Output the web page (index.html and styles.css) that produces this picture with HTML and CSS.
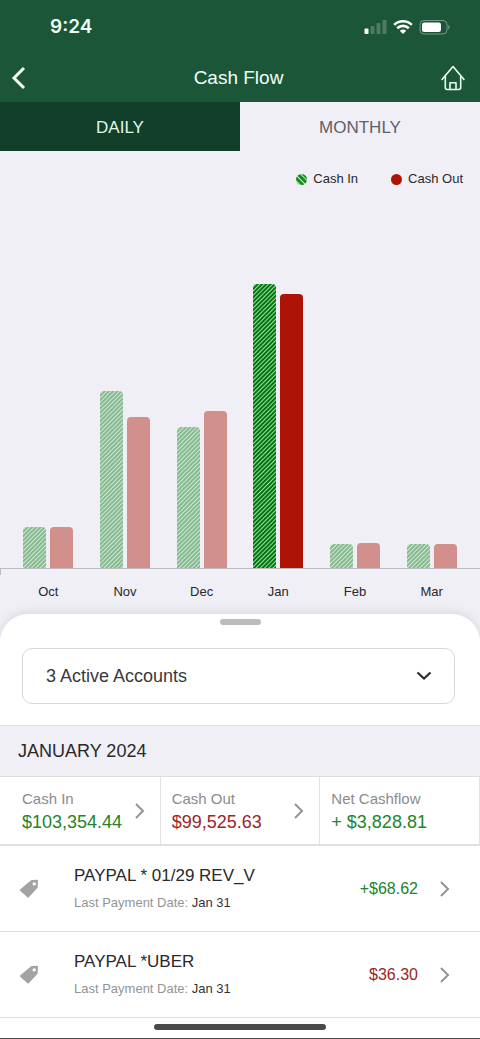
FILE: index.html
```html
<!DOCTYPE html>
<html lang="en">
<head>
<meta charset="utf-8">
<meta name="viewport" content="width=device-width, initial-scale=1">
<title>Cash Flow</title>
<link rel="stylesheet" href="styles.css">
</head>
<body>
<header class="header">
  <div class="status">
    <span class="time">9:24</span>
    <svg class="status-icons" width="86" height="18" viewBox="0 0 86 18" fill="#fff" aria-hidden="true">
      <rect x="0.500" y="10.500" width="4" height="5.500" rx="1"/>
      <g opacity=".22"><rect x="6.500" y="8" width="4" height="8" rx="1"/><rect x="12.500" y="5" width="4" height="11" rx="1"/><rect x="18.500" y="2" width="4" height="14" rx="1"/></g>
      <g fill="none" stroke="#fff" stroke-width="2.600"><path d="M30.200 6.800a12.500 12.500 0 0 1 17.600 0"/><path d="M33.200 10.200a8.300 8.300 0 0 1 11.600 0"/></g>
      <path d="M35.800 12.700a4.600 4.600 0 0 1 6.400 0L39 16z"/>
      <rect x="56" y="2.500" width="27" height="13.500" rx="4" fill="none" stroke="#fff" stroke-opacity=".4"/>
      <rect x="58" y="4.500" width="19" height="9.500" rx="2.200"/>
      <path d="M84.400 7v4.500c1.400-.6 1.400-3.900 0-4.500z" opacity=".5"/>
    </svg>
  </div>
  <div class="navbar">
    <button class="icon-button" aria-label="Back"><svg width="16" height="24" viewBox="0 0 16 24" fill="none" stroke="#f2fff8" stroke-width="3"><path d="M13 2L3 12l10 10"/></svg></button>
    <h1 class="title">Cash Flow</h1>
    <button class="icon-button home" aria-label="Home"><svg width="26" height="26" viewBox="0 0 26 26" fill="none" stroke="#eafff3" stroke-width="1.600" stroke-linejoin="round" stroke-linecap="round"><path d="M2 14.500L13 1.500l11 13"/><path d="M5.300 11v11.500a2 2 0 0 0 2 2h11.400a2 2 0 0 0 2-2V11"/><path d="M10 24.500v-6.700h6v6.700"/></svg></button>
  </div>
</header>
<main class="main">
  <div class="tabs" role="tablist">
    <button class="tab tab-dark" role="tab" aria-selected="false">DAILY</button>
    <button class="tab" role="tab" aria-selected="true">MONTHLY</button>
  </div>
  <section class="chart" aria-label="Monthly cash flow">
    <div class="legend">
      <span class="legend-item"><i class="dot dot-in"></i>Cash In</span>
      <span class="legend-item"><i class="dot dot-out"></i>Cash Out</span>
    </div>
    <div class="plot">
      <div class="pair"><i class="bar bar-in" style="height:41px"></i><i class="bar bar-out" style="height:41px"></i></div>
      <div class="pair"><i class="bar bar-in" style="height:177px"></i><i class="bar bar-out" style="height:151px"></i></div>
      <div class="pair"><i class="bar bar-in" style="height:141px"></i><i class="bar bar-out" style="height:157px"></i></div>
      <div class="pair current"><i class="bar bar-in" style="height:284px"></i><i class="bar bar-out" style="height:274px"></i></div>
      <div class="pair"><i class="bar bar-in" style="height:24px"></i><i class="bar bar-out" style="height:25px"></i></div>
      <div class="pair"><i class="bar bar-in" style="height:24px"></i><i class="bar bar-out" style="height:24px"></i></div>
    </div>
    <div class="axis"><span>Oct</span><span>Nov</span><span>Dec</span><span>Jan</span><span>Feb</span><span>Mar</span></div>
  </section>
  <section class="sheet">
    <div class="grabber"></div>
    <div class="picker">
      <select class="select" aria-label="Accounts"><option>3 Active Accounts</option></select>
      <svg class="caret" width="16" height="10" viewBox="0 0 16 10" fill="none" stroke="#2b2b30" stroke-width="2.200"><path d="M1.500 1.500L8 7.500l6.500-6"/></svg>
    </div>
    <h2 class="month">JANUARY 2024</h2>
    <div class="summary">
      <button class="total"><span class="figures"><span class="label">Cash In</span><span class="value green">$103,354.44</span></span><svg class="chevron" width="10" height="16" viewBox="0 0 10 16"><path d="M1 1l7 7-7 7"/></svg></button>
      <button class="total next"><span class="figures"><span class="label">Cash Out</span><span class="value red">$99,525.63</span></span><svg class="chevron" width="10" height="16" viewBox="0 0 10 16"><path d="M1 1l7 7-7 7"/></svg></button>
      <div class="total next"><span class="figures"><span class="label">Net Cashflow</span><span class="value green">+ $3,828.81</span></span></div>
    </div>
    <button class="row">
      <svg class="tag" width="20" height="20" viewBox="0 0 20 20"><path fill-rule="evenodd" d="M11.500 1.700Q12 1 13 1L18 .8q1 0 1 1l-.3 6q0 .8-.6 1.500l-8.300 9q-.7.700-1.400 0L1.200 11.800q-.7-.8.1-1.500zM15.200 3.200a1.700 1.700 0 1 0 .1 3.400 1.700 1.700 0 0 0-.1-3.400z"/></svg>
      <span class="details"><span class="name">PAYPAL * 01/29 REV_V</span><span class="date">Last Payment Date: <b>Jan 31</b></span></span>
      <span class="amount green">+$68.62</span>
      <svg class="chevron" width="10" height="16" viewBox="0 0 10 16"><path d="M1 1l7 7-7 7"/></svg>
    </button>
    <button class="row">
      <svg class="tag" width="20" height="20" viewBox="0 0 20 20"><path fill-rule="evenodd" d="M11.500 1.700Q12 1 13 1L18 .8q1 0 1 1l-.3 6q0 .8-.6 1.500l-8.300 9q-.7.700-1.400 0L1.200 11.800q-.7-.8.1-1.500zM15.200 3.200a1.700 1.700 0 1 0 .1 3.400 1.700 1.700 0 0 0-.1-3.400z"/></svg>
      <span class="details"><span class="name">PAYPAL *UBER</span><span class="date">Last Payment Date: <b>Jan 31</b></span></span>
      <span class="amount red">$36.30</span>
      <svg class="chevron" width="10" height="16" viewBox="0 0 10 16"><path d="M1 1l7 7-7 7"/></svg>
    </button>
    <div class="home-area"><div class="home-bar"></div></div>
  </section>
</main>
</body>
</html>
```
FILE: styles.css
```css
* { box-sizing: border-box; }
body {
  margin: 0;
  background: #f0eff5;
  color: #29282d;
  font-family: "Liberation Sans", Arial, sans-serif;
}
button {
  border: 0;
  padding: 0;
  background: none;
  color: inherit;
  font: inherit;
  text-align: left;
}
svg { display: block; flex: none; }

.header { background: #1b5638; color: #f2fff8; }
.status {
  display: flex;
  justify-content: space-between;
  align-items: center;
  height: 54px;
  padding: 0 30px 0 50px;
}
.time { font: 600 19px/24px Inter, sans-serif; }
.navbar {
  display: grid;
  grid-template-columns: 1fr auto 1fr;
  align-items: center;
  height: 48px;
  padding: 0 14px 0 11px;
}
.icon-button { justify-self: start; }
.home { justify-self: end; }
.title { margin: 0; font-size: 19px; line-height: 24px; font-weight: 400; }

.tabs { display: grid; grid-template-columns: 1fr 1fr; }
.tab {
  height: 49px;
  padding-top: 2px;
  color: #626068;
  font-size: 17px;
  text-align: center;
}
.tab-dark { background: #113f29; color: #e0f8ea; }

.legend {
  display: flex;
  justify-content: flex-end;
  gap: 33px;
  padding: 18px 17px 0;
  font-size: 13px;
  line-height: 20px;
}
.legend-item { display: flex; align-items: center; gap: 6px; }
.dot { width: 11px; height: 11px; border-radius: 50%; }
.dot-in { background: repeating-linear-gradient(45deg, #168a22 0 2px, #c9f2cc 3px, #168a22 4px); }
.dot-out { background: #ad1405; }
.plot, .axis {
  display: grid;
  grid-template-columns: repeat(6, 1fr);
  padding: 0 10px;
}
.plot { height: 380px; border-bottom: 1px solid #bdbcc2; }
.pair {
  display: flex;
  justify-content: center;
  align-items: flex-end;
  gap: 4px;
  opacity: .43;
}
.current { opacity: 1; }
.bar { width: 23px; border-radius: 4px 4px 0 0; }
.bar-in { background: repeating-linear-gradient(135deg, #087016 0 1px, #8fe894 2px, #087016 3px); }
.bar-out { background: #ad1405; }
.axis {
  position: relative;
  padding-top: 13px;
  padding-bottom: 12px;
  font-size: 13px;
  line-height: 20px;
  text-align: center;
}
.axis::before {
  content: "";
  position: absolute;
  top: 0;
  left: 0;
  width: 1px;
  height: 6px;
  background: #bdbcc2;
}

.sheet {
  padding-top: 5px;
  background: #fff;
  border-radius: 28px 28px 0 0;
  box-shadow: 0 -2px 10px #d9d8e0;
}
.grabber, .home-bar { height: 6px; margin: 0 auto; border-radius: 3px; }
.grabber { width: 41px; background: #bcbcbe; }
.picker { display: grid; align-items: center; margin: 23px 25px 21px 22px; }
.select, .caret { grid-area: 1 / 1; }
.select {
  appearance: none;
  width: 100%;
  height: 56px;
  padding: 0 48px 0 23px;
  border: 1px solid #d8d7db;
  border-radius: 10px;
  background: #fff;
  color: #39383c;
  font: 18px "Liberation Sans", Arial, sans-serif;
}
.caret { justify-self: end; margin-right: 23px; pointer-events: none; }
.month {
  margin: 0;
  padding: 13px 18px;
  border-top: 1px solid #e0dfe3;
  border-bottom: 1px solid #dddce0;
  background: #f0eff5;
  font-size: 18px;
  line-height: 24px;
  font-weight: 400;
}
.summary {
  display: grid;
  grid-template-columns: 1fr 1fr 1fr;
  border-right: 1px solid #e2e2e4;
  border-bottom: 2px solid #e0e0e2;
}
.total {
  display: flex;
  align-items: center;
  justify-content: space-between;
  height: 67px;
  padding: 0 15px 0 22px;
}
.next { padding-left: 11px; border-left: 1px solid #e2e2e4; }
.figures, .details { display: flex; flex-direction: column; }
.label { color: #8b8b8e; font-size: 15px; line-height: 22px; }
.value { font-size: 18px; line-height: 24px; white-space: nowrap; }
.green { color: #22842d; }
.red { color: #9d2427; }
.chevron { fill: none; stroke: #949497; stroke-width: 2; }
.row {
  display: flex;
  align-items: center;
  width: 100%;
  height: 86px;
  padding: 0 30px 0 19px;
  border-bottom: 1px solid #dededf;
}
.tag { fill: #a3a3a4; }
.details { flex: 1; gap: 4px; padding-left: 35px; }
.name { font-size: 17px; line-height: 24px; }
.date { color: #949497; font-size: 13px; line-height: 22px; }
.date b { color: #343337; font-weight: 400; }
.amount { margin-right: 22px; font-size: 16px; }
.home-area { padding: 6px 0 8px; border-bottom: 2px solid #4b4b4d; }
.home-bar { width: 36%; background: #4a4a4c; }
```
